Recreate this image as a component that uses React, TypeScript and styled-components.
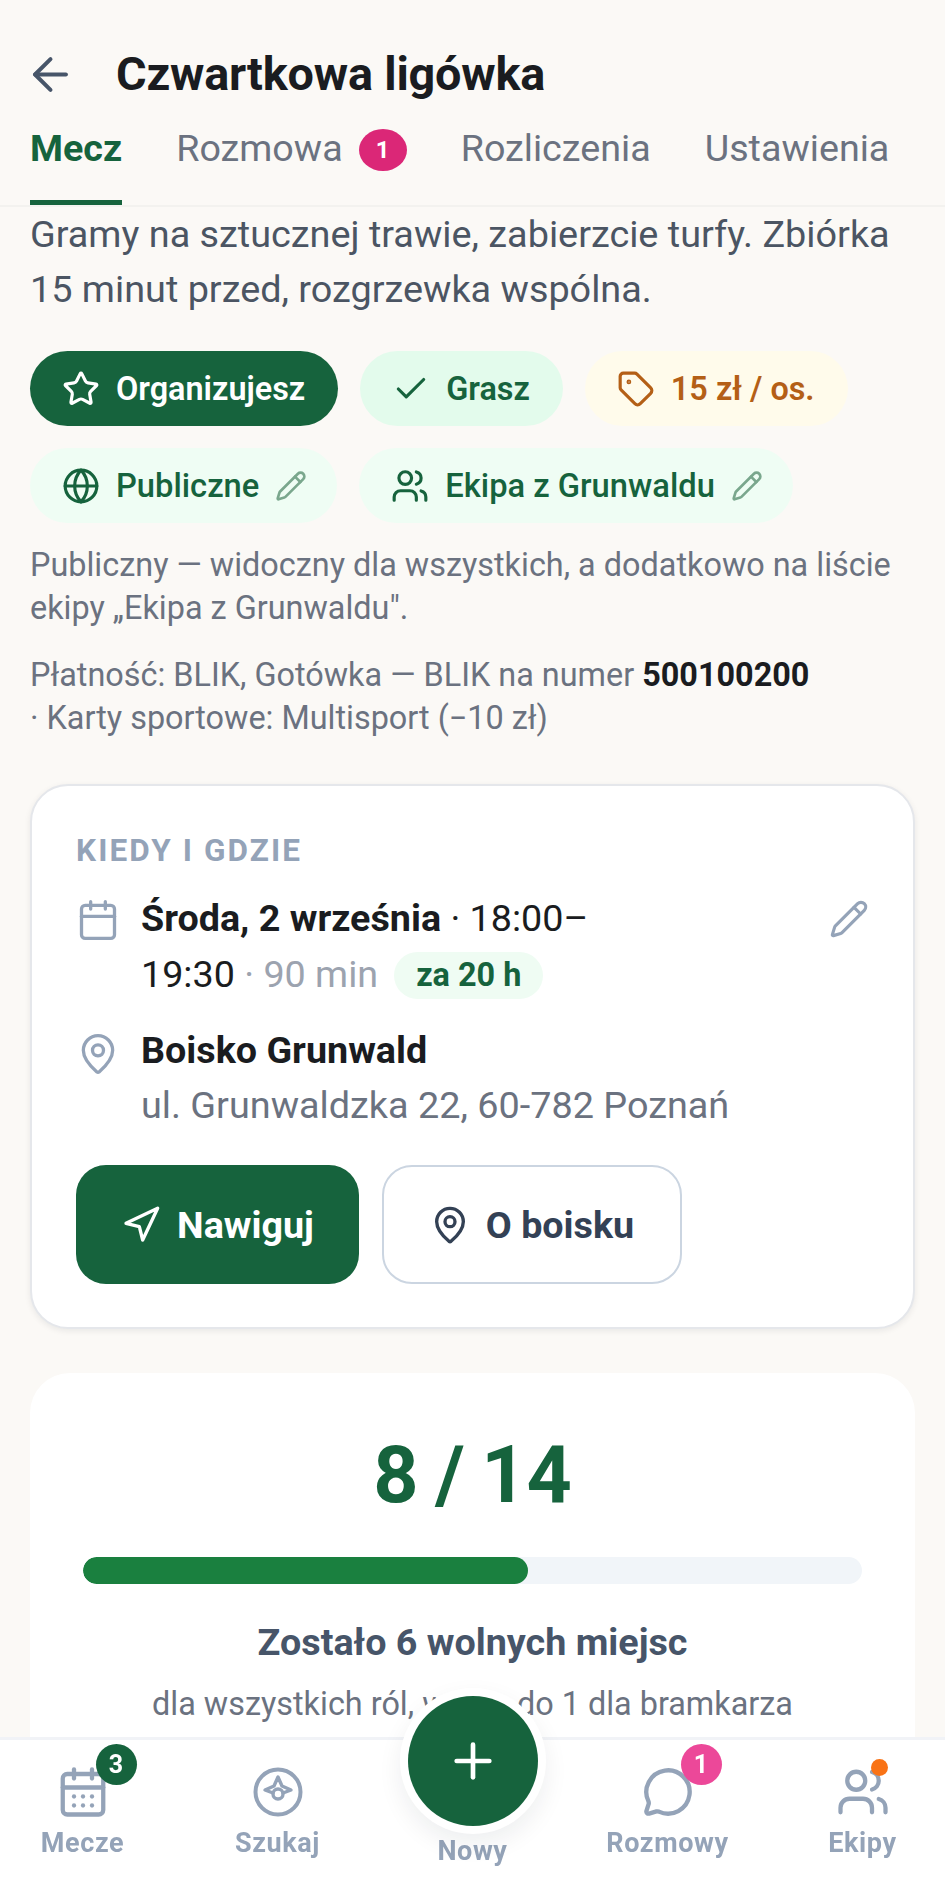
import styled, { createGlobalStyle } from "styled-components";
import {
  ArrowLeft,
  CalendarDays,
  Calendar,
  Check,
  Globe,
  MapPin,
  MessageCircle,
  Navigation,
  Pencil,
  Plus,
  Star,
  Tag,
  Users,
} from "lucide-react";

const GREEN = "#16633d";

const GlobalStyle = createGlobalStyle`
  html, body {
    margin: 0;
    padding: 0;
    height: 100%;
    overflow: hidden;
    background: #fbf9f6;
  }
  * {
    box-sizing: border-box;
  }
`;

const CompassIcon = () => (
  <svg width="50" height="50" viewBox="0 0 50 50" fill="none" stroke="#94a3b8" strokeWidth="4" strokeLinejoin="round" strokeLinecap="round">
    <circle cx="25" cy="25" r="22.5" />
    <path d="M20 26 L12 23 L21 19 L25 10 L29 19 L38 23 L30 26" strokeWidth="3.4" />
    <circle cx="25" cy="27" r="5" strokeWidth="3.4" />
  </svg>
);

const tabs = [
  { label: "Mecz", active: true },
  { label: "Rozmowa", badge: "1" },
  { label: "Rozliczenia" },
  { label: "Ustawienia" },
];

export default function App() {
  return (
    <Page>
      <GlobalStyle />
      <Header>
        <TitleRow>
          <ArrowLeft size={53} color="#475569" strokeWidth={1.8} />
          <Title>Czwartkowa ligówka</Title>
        </TitleRow>
        <Tabs>
          {tabs.map((tab) => (
            <Tab key={tab.label} $active={tab.active}>
              {tab.label}
              {tab.badge && <TabBadge>{tab.badge}</TabBadge>}
            </Tab>
          ))}
        </Tabs>
      </Header>

      <Content>
        <Description>Gramy na sztucznej trawie, zabierzcie turfy. Zbiórka 15 minut przed, rozgrzewka wspólna.</Description>

        <Chips>
          <Chip $variant="solid">
            <Star size={38} strokeWidth={2} />
            Organizujesz
          </Chip>
          <Chip $variant="mint">
            <Check size={38} strokeWidth={2} />
            Grasz
          </Chip>
          <Chip $variant="amber">
            <Tag size={38} strokeWidth={2} />
            15 zł / os.
          </Chip>
          <EditableChip $variant="pale">
            <Globe size={38} strokeWidth={2} />
            Publiczne
            <ChipEdit>
              <Pencil size={32} strokeWidth={2} />
            </ChipEdit>
          </EditableChip>
          <EditableChip $variant="pale">
            <Users size={38} strokeWidth={2} />
            Ekipa z Grunwaldu
            <ChipEdit>
              <Pencil size={32} strokeWidth={2} />
            </ChipEdit>
          </EditableChip>
        </Chips>

        <Note>Publiczny — widoczny dla wszystkich, a dodatkowo na liście ekipy „Ekipa z Grunwaldu".</Note>
        <PaymentNote>
          Płatność: BLIK, Gotówka — BLIK na numer <strong>500100200</strong>
          <br />· Karty sportowe: Multisport (−10 zł)
        </PaymentNote>

        <WhenCard>
          <CardLabel>KIEDY I GDZIE</CardLabel>
          <InfoRow>
            <InfoIcon>
              <Calendar size={44} color="#94a3b8" strokeWidth={1.8} />
            </InfoIcon>
            <DateText>
              <strong>Środa, 2 września</strong> · 18:00–
              <br />
              19:30 <Muted>· 90 min</Muted>
              <TimePill>za 20 h</TimePill>
            </DateText>
            <EditButton>
              <Pencil size={40} color="#94a3b8" strokeWidth={1.9} />
            </EditButton>
          </InfoRow>
          <PlaceRow>
            <InfoIcon>
              <MapPin size={44} color="#94a3b8" strokeWidth={1.8} />
            </InfoIcon>
            <div>
              <PlaceName>Boisko Grunwald</PlaceName>
              <PlaceAddress>ul. Grunwaldzka 22, 60-782 Poznań</PlaceAddress>
            </div>
          </PlaceRow>
          <Actions>
            <ActionButton $primary>
              <Navigation size={40} strokeWidth={2} />
              Nawiguj
            </ActionButton>
            <ActionButton>
              <MapPin size={40} strokeWidth={2} />O boisku
            </ActionButton>
          </Actions>
        </WhenCard>

        <SlotsCard>
          <SlotsCount>8 / 14</SlotsCount>
          <Progress>
            <ProgressFill style={{ width: `${(8 / 14) * 100}%` }} />
          </Progress>
          <SlotsTitle>Zostało 6 wolnych miejsc</SlotsTitle>
          <SlotsHint>dla wszystkich ról, w tym do 1 dla bramkarza</SlotsHint>
        </SlotsCard>
      </Content>

      <BottomNav>
        <NavItem>
          <NavIcon>
            <CalendarDays size={54} strokeWidth={1.9} />
            <NavBadge $color={GREEN}>3</NavBadge>
          </NavIcon>
          Mecze
        </NavItem>
        <NavItem>
          <NavIcon>
            <CompassIcon />
          </NavIcon>
          Szukaj
        </NavItem>
        <NewItem>
          <Fab>
            <Plus size={56} strokeWidth={2} />
          </Fab>
          Nowy
        </NewItem>
        <NavItem>
          <NavIcon>
            <MessageCircle size={52} strokeWidth={2} />
            <NavBadge $color="#ec4899">1</NavBadge>
          </NavIcon>
          Rozmowy
        </NavItem>
        <NavItem>
          <NavIcon>
            <Users size={54} strokeWidth={1.9} />
            <NavDot />
          </NavIcon>
          Ekipy
        </NavItem>
      </BottomNav>
    </Page>
  );
}

const Page = styled.div`
  height: 100vh;
  overflow: hidden;
  background: #fbf9f6;
  font-family: Roboto, "Liberation Sans", sans-serif;
`;

const Header = styled.header`
  height: 207px;
  padding: 0 30px;
  border-bottom: 2px solid #f3f2ef;
`;

const TitleRow = styled.div`
  display: flex;
  align-items: center;
  gap: 39px;
  height: 116px;
  padding-top: 32px;
  margin-left: -6px;
`;

const Title = styled.h1`
  margin: 0;
  font-size: 46.8px;
  font-weight: 700;
  letter-spacing: -0.2px;
  color: #1a1c20;
  white-space: nowrap;
`;

const Tabs = styled.nav`
  display: flex;
  gap: 54px;
`;

const Tab = styled.div<{ $active?: boolean }>`
  display: flex;
  align-items: center;
  height: 89px;
  padding-bottom: 21px;
  font-size: 37.7px;
  font-weight: ${(p) => (p.$active ? 700 : 400)};
  color: ${(p) => (p.$active ? GREEN : "#6b7280")};
  border-bottom: 5px solid ${(p) => (p.$active ? GREEN : "transparent")};
`;

const TabBadge = styled.span`
  display: flex;
  align-items: center;
  justify-content: center;
  width: 48px;
  height: 42px;
  margin: 4px 0 0 16px;
  border-radius: 50%;
  background: #db2777;
  color: #fff;
  font-size: 24px;
  font-weight: 700;
`;

const Content = styled.main`
  padding: 0 28px 0 30px;
`;

const Description = styled.p`
  margin: 0;
  font-size: 37.8px;
  line-height: 55px;
  color: #4b5563;
`;

const chipColors = {
  solid: { bg: GREEN, fg: "#fff" },
  mint: { bg: "#e3fbec", fg: GREEN },
  amber: { bg: "#fffbeb", fg: "#b45f16" },
  pale: { bg: "#effdf4", fg: GREEN },
};

const Chips = styled.div`
  display: flex;
  flex-wrap: wrap;
  gap: 22px;
  margin-top: 34px;
`;

const Chip = styled.div<{ $variant: keyof typeof chipColors }>`
  display: flex;
  align-items: center;
  gap: 16px;
  height: 75px;
  padding: 0 33px 0 32px;
  border-radius: 38px;
  font-size: 32.4px;
  font-weight: 600;
  white-space: nowrap;
  background: ${(p) => chipColors[p.$variant].bg};
  color: ${(p) => chipColors[p.$variant].fg};
`;

const EditableChip = styled(Chip)`
  padding-right: 30px;
  font-size: 32.7px;
  font-weight: 500;
`;

const ChipEdit = styled.span`
  display: flex;
  color: #7aa78d;
`;

const Note = styled.p`
  margin: 21px 0 0;
  font-size: 32.4px;
  line-height: 43px;
  color: #6b7280;
`;

const PaymentNote = styled(Note)`
  margin-top: 24px;

  strong {
    color: #1a1c20;
    font-weight: 700;
  }
`;

const WhenCard = styled.section`
  width: 885px;
  height: 545px;
  margin-top: 44px;
  padding: 48px 44px 0 44px;
  background: #fff;
  border: 2px solid #e5e7eb;
  border-radius: 38px;
  box-shadow: 0 2px 6px rgba(15, 23, 42, 0.08);
`;

const CardLabel = styled.div`
  font-size: 31.5px;
  line-height: 34px;
  font-weight: 700;
  letter-spacing: 2.1px;
  color: #94a3b8;
`;

const InfoRow = styled.div`
  display: flex;
  gap: 22px;
  margin-top: 22px;
`;

const PlaceRow = styled(InfoRow)`
  margin-top: 22px;
`;

const InfoIcon = styled.div`
  flex: none;
  width: 43px;
  padding-top: 8px;
`;

const DateText = styled.div`
  flex: 1;
  font-size: 37.7px;
  line-height: 56px;
  color: #1a1c20;

  strong {
    font-weight: 700;
  }
`;

const Muted = styled.span`
  color: #9ca3af;
`;

const TimePill = styled.span`
  display: inline-block;
  margin-left: 16px;
  padding: 0 22px;
  height: 47px;
  border-radius: 24px;
  line-height: 47px;
  font-size: 32.4px;
  font-weight: 700;
  color: ${GREEN};
  background: #effcf3;
  vertical-align: 1px;
`;

const EditButton = styled.div`
  flex: none;
  margin: 9px 0 0;
`;

const PlaceName = styled.div`
  font-size: 37.7px;
  line-height: 52px;
  font-weight: 700;
  color: #1a1c20;
`;

const PlaceAddress = styled.div`
  margin-top: 3px;
  font-size: 37.8px;
  line-height: 52px;
  color: #6b7280;
`;

const Actions = styled.div`
  display: flex;
  gap: 23px;
  margin-top: 34px;
`;

const ActionButton = styled.div<{ $primary?: boolean }>`
  display: flex;
  align-items: center;
  justify-content: center;
  gap: 16px;
  width: ${(p) => (p.$primary ? "283px" : "300px")};
  height: 119px;
  border-radius: 30px;
  font-size: 37.7px;
  font-weight: 700;
  background: ${(p) => (p.$primary ? GREEN : "#fff")};
  color: ${(p) => (p.$primary ? "#fff" : "#334155")};
  border: ${(p) => (p.$primary ? "none" : "2px solid #cbd5e1")};
`;

const SlotsCard = styled.section`
  width: 885px;
  height: 500px;
  margin-top: 44px;
  padding: 50px 53px 0;
  background: #fff;
  border-radius: 40px;
  text-align: center;
`;

const SlotsCount = styled.div`
  font-size: 79px;
  line-height: 104px;
  font-weight: 700;
  word-spacing: -3px;
  color: ${GREEN};
`;

const Progress = styled.div`
  width: 779px;
  height: 27px;
  margin-top: 30px;
  border-radius: 14px;
  background: #f1f5f9;
  overflow: hidden;
`;

const ProgressFill = styled.div`
  height: 100%;
  border-radius: 14px;
  background: #1a803f;
`;

const SlotsTitle = styled.div`
  margin-top: 35px;
  font-size: 37.7px;
  line-height: 46px;
  font-weight: 700;
  color: #475569;
  white-space: nowrap;
`;

const SlotsHint = styled.div`
  margin-top: 18px;
  font-size: 32.4px;
  line-height: 42px;
  color: #6b7280;
  white-space: nowrap;
`;

const BottomNav = styled.nav`
  position: fixed;
  left: 0;
  right: 0;
  bottom: 0;
  height: 140px;
  display: grid;
  grid-template-columns: repeat(5, 195px);
  justify-content: center;
  background: #fff;
  border-top: 3px solid #f1f3f7;
`;

const NavItem = styled.div`
  position: relative;
  display: flex;
  flex-direction: column;
  align-items: center;
  padding-top: 25px;
  font-size: 27px;
  line-height: 36px;
  font-weight: 700;
  letter-spacing: 0.6px;
  color: #94a3b8;
`;

const NewItem = styled(NavItem)`
  justify-content: flex-end;
  padding-bottom: 8px;
`;

const NavIcon = styled.div`
  position: relative;
  width: 54px;
  height: 54px;
  display: flex;
  align-items: center;
  justify-content: center;
  margin-bottom: 6px;
`;

const NavBadge = styled.span<{ $color: string }>`
  position: absolute;
  top: -21px;
  left: 40px;
  width: 41px;
  height: 41px;
  display: flex;
  align-items: center;
  justify-content: center;
  border-radius: 50%;
  background: ${(p) => p.$color};
  color: #fff;
  font-size: 25px;
  font-weight: 700;
  letter-spacing: 0;
`;

const NavDot = styled.span`
  position: absolute;
  top: -6px;
  right: 2px;
  width: 17px;
  height: 17px;
  border-radius: 50%;
  background: #f97316;
`;

const Fab = styled.div`
  position: absolute;
  top: -44px;
  left: 33px;
  width: 130px;
  height: 130px;
  display: flex;
  align-items: center;
  justify-content: center;
  border-radius: 50%;
  background: ${GREEN};
  color: #fff;
  box-shadow: 0 0 0 8px #fff, 0 10px 24px 8px rgba(15, 23, 42, 0.07);
`;
